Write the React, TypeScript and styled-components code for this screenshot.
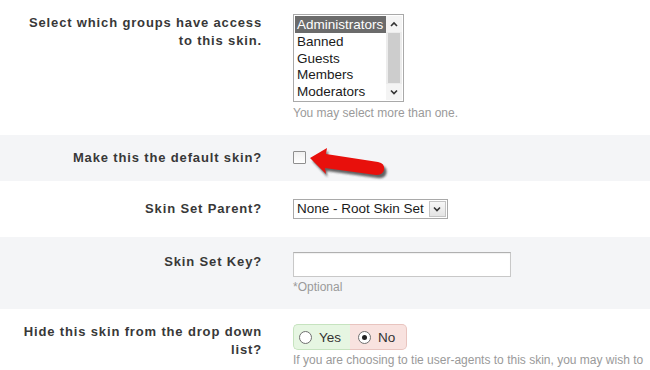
import styled, { createGlobalStyle } from 'styled-components';

const GlobalStyle = createGlobalStyle`
  html, body {
    margin: 0;
    padding: 0;
    background: #ffffff;
    overflow: hidden;
  }
  body {
    font-family: "Liberation Sans", Arial, sans-serif;
    color: #333333;
  }
`;

const groups = ["Administrators", "Banned", "Guests", "Members", "Moderators"];

const Page = styled.div`
  width: 650px;
  height: 370px;
  overflow: hidden;
`;

const Row = styled.div<{ $alt?: boolean; $pad: string }>`
  display: grid;
  grid-template-columns: 262px 1fr;
  column-gap: 31px;
  padding: ${(p) => p.$pad};
  background: ${(p) => (p.$alt ? '#f4f5f7' : '#ffffff')};
`;

const Label = styled.div<{ $top?: number }>`
  text-align: right;
  font-weight: bold;
  font-size: 13px;
  line-height: 18px;
  color: #383838;
  letter-spacing: 0.85px;
  margin-top: ${(p) => p.$top ?? 0}px;
`;

const Field = styled.div`
  position: relative;
  display: flex;
  flex-direction: column;
  align-items: flex-start;
  min-width: 0;
`;

const Help = styled.div<{ $gap?: number }>`
  font-size: 12px;
  line-height: 14px;
  color: #9a9a9a;
  margin-top: ${(p) => p.$gap ?? 4}px;
  white-space: nowrap;
`;

const ListBox = styled.div`
  display: flex;
  width: 107px;
  height: 84px;
  border: 1px solid #a9a9a9;
  background: #fff;
  padding: 1px;
  box-sizing: content-box;
`;

const ListItems = styled.div`
  flex: 1;
  display: flex;
  flex-direction: column;
`;

const ListItem = styled.div<{ $selected?: boolean }>`
  height: 17px;
  line-height: 17px;
  font-size: 13.5px;
  padding-left: 2px;
  color: ${(p) => (p.$selected ? '#ffffff' : '#1a1a1a')};
  background: ${(p) => (p.$selected ? '#6b6b6b' : 'transparent')};
  white-space: nowrap;
  overflow: hidden;
`;

const ScrollBar = styled.div`
  width: 16px;
  display: flex;
  flex-direction: column;
  background: #ececec;
`;

const ScrollBtn = styled.div`
  height: 16px;
  display: flex;
  align-items: center;
  justify-content: center;
  background: #f4f4f4;
`;

const ScrollThumb = styled.div`
  flex: 1;
  margin: 1px 2px;
  background: #cdcdcd;
`;

const Check = styled.div`
  width: 11px;
  height: 11px;
  border: 1px solid #8f8f8f;
  border-radius: 1px;
  background: linear-gradient(#f0f0f0, #ffffff);
  margin-top: 2px;
`;

const Select = styled.div`
  display: flex;
  align-items: stretch;
  height: 20px;
  border: 1px solid #a9a9a9;
  box-sizing: border-box;
  background: #fff;
`;

const SelectText = styled.div`
  font-size: 13.5px;
  line-height: 18px;
  padding: 0 4px 0 3px;
  color: #1a1a1a;
  white-space: nowrap;
`;

const SelectBtn = styled.div`
  width: 15px;
  margin: 1px;
  border: 1px solid #c4c4c4;
  background: linear-gradient(#f7f7f7, #e4e4e4);
  display: flex;
  align-items: center;
  justify-content: center;
`;

const TextInput = styled.div`
  width: 218px;
  height: 25px;
  box-sizing: border-box;
  border: 1px solid #c8c8c8;
  border-top-color: #b0b0b0;
  background: #fff;
  box-shadow: inset 0 1px 1px rgba(0, 0, 0, 0.06);
`;

const Toggle = styled.div`
  display: flex;
  height: 26px;
`;

const ToggleHalf = styled.div<{ $tone: 'yes' | 'no' }>`
  display: flex;
  align-items: center;
  gap: 7px;
  width: 57px;
  box-sizing: border-box;
  padding-left: ${(p) => (p.$tone === 'yes' ? '5px' : '8px')};
  font-size: 13.5px;
  color: #333;
  background: ${(p) => (p.$tone === 'yes' ? '#e6f6e2' : '#f8e2df')};
  border: 1px solid ${(p) => (p.$tone === 'yes' ? '#c6e3bf' : '#e8c4bf')};
  border-left-width: ${(p) => (p.$tone === 'yes' ? '1px' : '0')};
  border-right-width: ${(p) => (p.$tone === 'yes' ? '0' : '1px')};
  border-radius: ${(p) => (p.$tone === 'yes' ? '5px 0 0 5px' : '0 5px 5px 0')};
`;

const Radio = styled.div<{ $on?: boolean }>`
  width: 11px;
  height: 11px;
  border-radius: 50%;
  border: 1px solid #6f6f6f;
  background: #fff;
  display: flex;
  align-items: center;
  justify-content: center;
  &::after {
    content: '';
    display: ${(p) => (p.$on ? 'block' : 'none')};
    width: 5px;
    height: 5px;
    border-radius: 50%;
    background: #222;
  }
`;

const ArrowLayer = styled.svg`
  position: absolute;
  left: 7px;
  top: -3px;
  overflow: visible;
  pointer-events: none;
`;

const Chevron = ({ up }: { up?: boolean }) => (
  <svg width="8" height="6" viewBox="0 0 8 6">
    <path
      d={up ? 'M1 5 L4 2 L7 5' : 'M1 1.5 L4 4.5 L7 1.5'}
      fill="none"
      stroke="#333"
      strokeWidth="1.6"
    />
  </svg>
);

const App = () => {
  return (
    <Page>
      <GlobalStyle />
      <Row $pad="14px 0 15px">
        <Label>
          Select which groups have access
          <br />
          to this skin.
        </Label>
        <Field>
          <ListBox>
            <ListItems>
              {groups.map((g, i) => (
                <ListItem key={g} $selected={i === 0}>
                  {g}
                </ListItem>
              ))}
            </ListItems>
            <ScrollBar>
              <ScrollBtn>
                <Chevron up />
              </ScrollBtn>
              <ScrollThumb />
              <ScrollBtn>
                <Chevron />
              </ScrollBtn>
            </ScrollBar>
          </ListBox>
          <Help>You may select more than one.</Help>
        </Field>
      </Row>
      <Row $alt $pad="14px 0 14px">
        <Label>Make this the default skin?</Label>
        <Field>
          <Check />
          <ArrowLayer width="90" height="40" viewBox="0 0 90 40">
            <defs>
              <filter id="shadow" x="-20%" y="-40%" width="140%" height="180%">
                <feGaussianBlur stdDeviation="1.2" />
              </filter>
            </defs>
            <path
              d="M11 13 L27 3 L26 9 L78 17 Q86 18 85 25 Q84 31 76 30 L25 23 L26 29 Z"
              fill="#333"
              opacity="0.75"
              transform="translate(1.5 2)"
              filter="url(#shadow)"
            />
            <path
              d="M10 12 L27 2 L26 8 L78 16 Q85 17 84 24 Q83 29 76 29 L25 22 L26 28 Z"
              fill="#e8100c"
            />
          </ArrowLayer>
        </Field>
      </Row>
      <Row $pad="18px 0 18px">
        <Label $top={1}>Skin Set Parent?</Label>
        <Field>
          <Select>
            <SelectText>None - Root Skin Set</SelectText>
            <SelectBtn>
              <Chevron />
            </SelectBtn>
          </Select>
        </Field>
      </Row>
      <Row $alt $pad="15px 0 15px">
        <Label $top={1}>Skin Set Key?</Label>
        <Field>
          <TextInput />
          <Help $gap={3}>*Optional</Help>
        </Field>
      </Row>
      <Row $pad="15px 0 10px">
        <Label $top={-1}>
          Hide this skin from the drop down
          <br />
          list?
        </Label>
        <Field>
          <Toggle>
            <ToggleHalf $tone="yes">
              <Radio />
              Yes
            </ToggleHalf>
            <ToggleHalf $tone="no">
              <Radio $on />
              No
            </ToggleHalf>
          </Toggle>
          <Help $gap={3}>
            If you are choosing to tie user-agents to this skin, you may wish to
          </Help>
        </Field>
      </Row>
    </Page>
  );
};

export default App;
